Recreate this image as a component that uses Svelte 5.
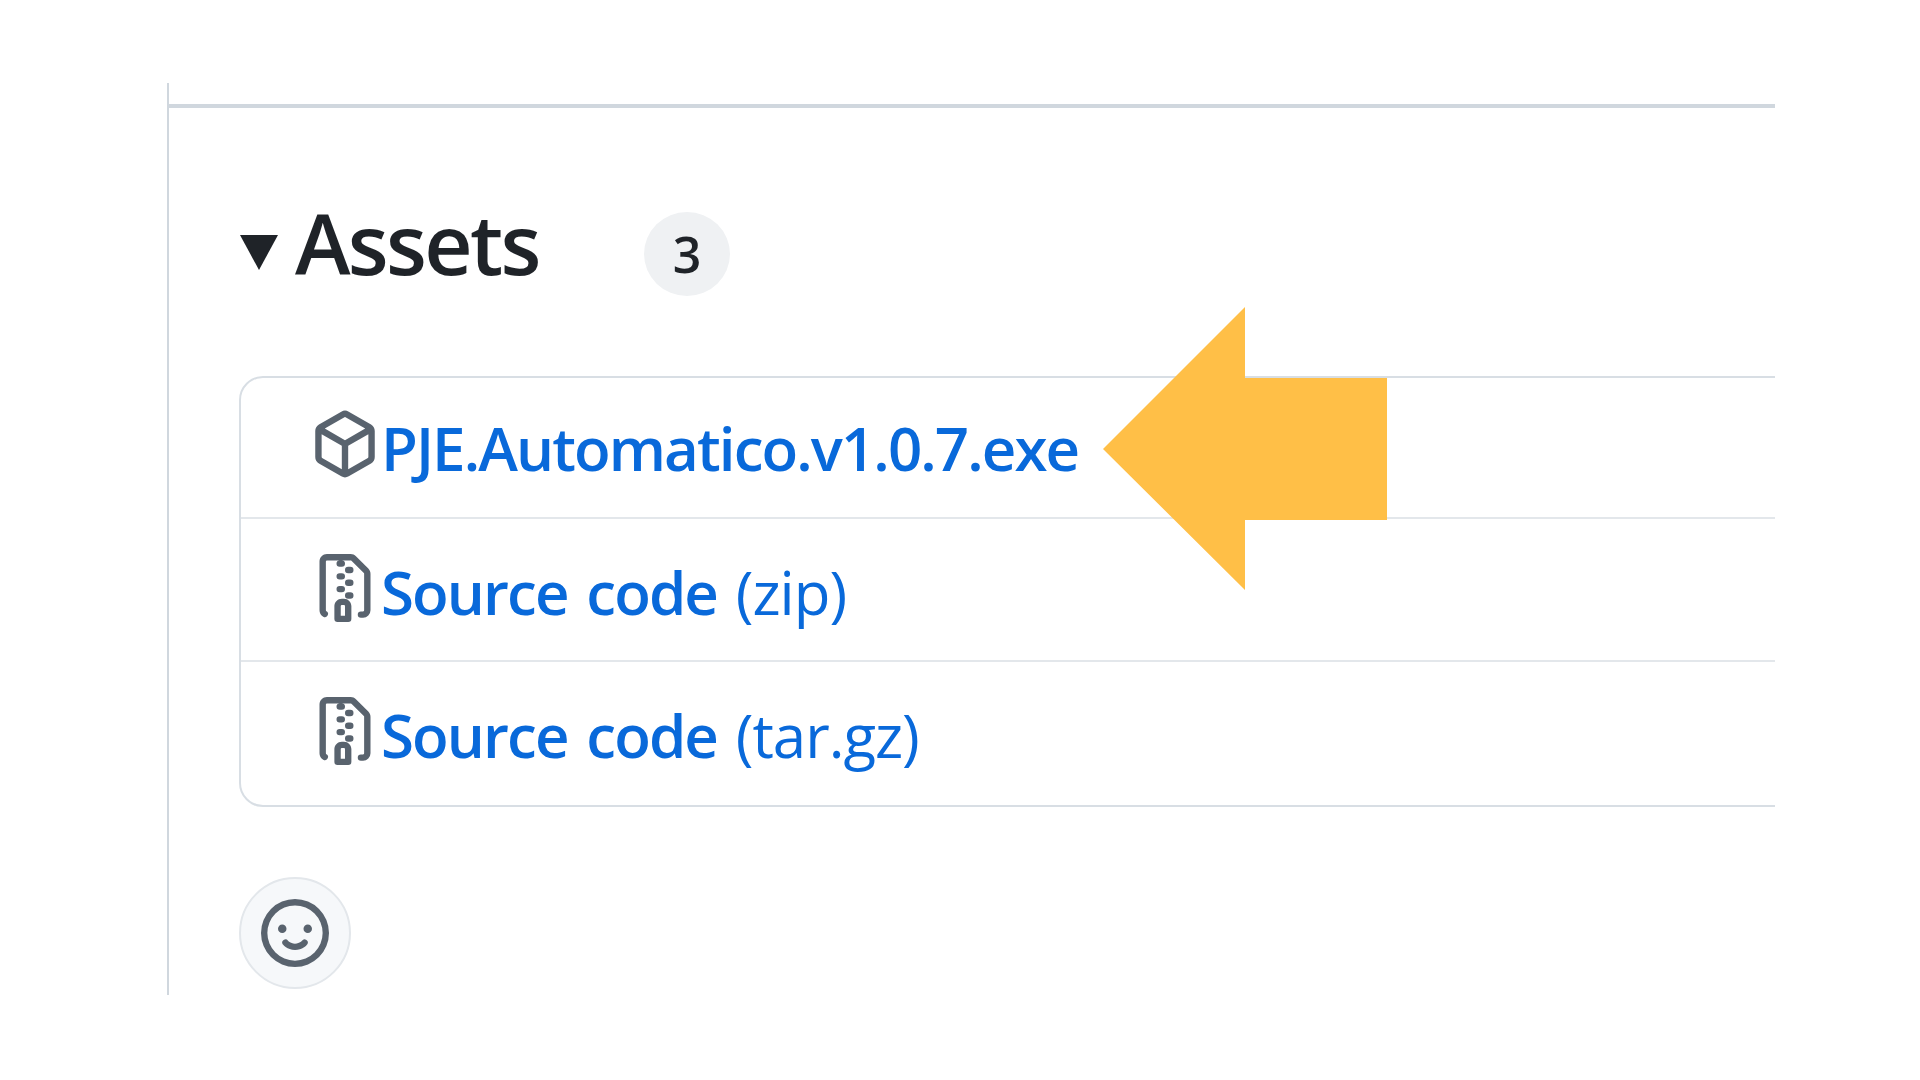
<script lang="ts">
	const zipPath =
		'M3.5 1.75v11.5c0 .09.048.173.126.217a.75.75 0 0 1-.752 1.298A1.748 1.748 0 0 1 2 13.25V1.75C2 .784 2.784 0 3.75 0h5.586c.464 0 .909.185 1.237.513l2.914 2.914c.329.328.513.773.513 1.237v8.586A1.75 1.75 0 0 1 12.25 15h-.5a.75.75 0 0 1 0-1.5h.5a.25.25 0 0 0 .25-.25V4.664a.25.25 0 0 0-.073-.177L9.513 1.573a.25.25 0 0 0-.177-.073H7.25a.75.75 0 0 1 0 1.5h-.5a.75.75 0 0 1 0-1.5h-3a.25.25 0 0 0-.25.25Zm3.75 8.75h.5c.966 0 1.75.784 1.75 1.75v3a.75.75 0 0 1-.75.75h-2.5a.75.75 0 0 1-.75-.75v-3c0-.966.784-1.75 1.75-1.75ZM6 5.25a.75.75 0 0 1 .75-.75h.5a.75.75 0 0 1 0 1.5h-.5A.75.75 0 0 1 6 5.25Zm.75 2.25h.5a.75.75 0 0 1 0 1.5h-.5a.75.75 0 0 1 0-1.5ZM8 6.75A.75.75 0 0 1 8.75 6h.5a.75.75 0 0 1 0 1.5h-.5A.75.75 0 0 1 8 6.75ZM8.75 3h.5a.75.75 0 0 1 0 1.5h-.5a.75.75 0 0 1 0-1.5ZM8 9.75A.75.75 0 0 1 8.75 9h.5a.75.75 0 0 1 0 1.5h-.5A.75.75 0 0 1 8 9.75Zm-1 2.5v2.25h1v-2.25a.25.25 0 0 0-.25-.25h-.5a.25.25 0 0 0-.25.25Z';
	const packagePath =
		'm8.878.392 5.25 3.045c.54.314.872.89.872 1.514v6.098a1.75 1.75 0 0 1-.872 1.514l-5.25 3.045a1.75 1.75 0 0 1-1.756 0l-5.25-3.045A1.75 1.75 0 0 1 1 11.049V4.951c0-.624.332-1.201.872-1.514L7.122.392a1.75 1.75 0 0 1 1.756 0ZM7.875 1.69l-4.63 2.685L8 7.133l4.755-2.758-4.63-2.685a.248.248 0 0 0-.25 0ZM2.5 5.677v5.372c0 .09.047.171.125.216l4.625 2.683V8.432Zm6.25 8.271 4.625-2.683a.25.25 0 0 0 .125-.216V5.677L8.75 8.432Z';
	const smileyPath =
		'M8 0a8 8 0 1 1 0 16A8 8 0 0 1 8 0ZM1.5 8a6.5 6.5 0 1 0 13 0 6.5 6.5 0 0 0-13 0Zm3.82 1.636a.75.75 0 0 1 1.038.175l.007.009c.103.118.22.222.35.31.264.178.683.37 1.285.37.602 0 1.02-.192 1.285-.371.13-.088.247-.192.35-.31l.007-.008a.75.75 0 0 1 1.222.87l-.022-.015c.02.013.021.015.021.015v.001l-.001.002-.002.003-.005.007-.014.019a2.066 2.066 0 0 1-.184.213c-.16.166-.338.316-.53.445-.63.418-1.37.638-2.127.629-.946 0-1.652-.308-2.126-.63a3.331 3.331 0 0 1-.715-.657l-.014-.02-.005-.006-.002-.003v-.002h-.001l.613-.432-.614.43a.75.75 0 0 1 .183-1.044ZM12 7a1 1 0 1 1-2 0 1 1 0 0 1 2 0ZM5 8a1 1 0 1 1 0-2 1 1 0 0 1 0 2Zm5.25 2.25.592.416a97.71 97.71 0 0 0-.592-.416Z';

	const assets = [
		{ icon: packagePath, name: 'PJE.Automatico.v1.0.7.exe', suffix: '' },
		{ icon: zipPath, name: 'Source code', suffix: '(zip)' },
		{ icon: zipPath, name: 'Source code', suffix: '(tar.gz)' }
	];
</script>

<div class="page">
	<div class="release">
		<hr class="rule" />

		<section class="assets">
			<header class="assets-head">
				<span class="caret"></span>
				<h2>Assets</h2>
				<span class="count">3</span>
			</header>

			<ul class="asset-list">
				{#each assets as asset}
					<li class="asset-row">
						<svg class="octicon" viewBox="0 0 16 16" aria-hidden="true">
							<path d={asset.icon} />
						</svg>
						<a href="#asset" class="asset-link">
							<strong>{asset.name}</strong>
							{#if asset.suffix}<span class="suffix">{asset.suffix}</span>{/if}
						</a>
					</li>
				{/each}
			</ul>

			<button class="reaction" type="button" aria-label="Add reaction">
				<svg class="octicon" viewBox="0 0 16 16" aria-hidden="true">
					<path d={smileyPath} />
				</svg>
			</button>
		</section>
	</div>

	<svg class="arrow" viewBox="0 0 284 283" aria-hidden="true">
		<polygon points="0,142 142,0 142,71 284,71 284,213 142,213 142,283" />
	</svg>
</div>

<style>
	:global(body) {
		background: #fff;
	}

	.page {
		position: relative;
		width: 1920px;
		height: 1080px;
		padding: 83px 0 0 167px;
		box-sizing: border-box;
		overflow: hidden;
		font-family: 'Open Sans', 'Noto Sans', sans-serif;
	}

	.release {
		width: 1606px;
		height: 912px;
		border-left: 2px solid #d0d7de;
		overflow: hidden;
		filter: blur(0.5px);
	}

	.rule {
		height: 4px;
		margin: 21px 0 0;
		border: none;
		background: #d0d7de;
	}

	.assets {
		padding: 0 0 0 70px;
	}

	.assets-head {
		display: flex;
		align-items: center;
		height: 104px;
		margin-top: 83px;
	}

	.caret {
		width: 0;
		height: 0;
		border-left: 19px solid transparent;
		border-right: 19px solid transparent;
		border-top: 35px solid #1f2328;
		margin: 18px 17px 0 1px;
	}

	h2 {
		margin: 0;
		font-size: 84px;
		font-weight: 600;
		line-height: 1;
		color: #1f2328;
		letter-spacing: -2.7px;
		width: 349px;
	}

	.count {
		display: flex;
		align-items: center;
		justify-content: center;
		width: 86px;
		height: 84px;
		margin: 22px 0 0 0;
		border-radius: 50%;
		background: #eff1f3;
		color: #1f2328;
		font-size: 50px;
		font-weight: 600;
	}

	.asset-list {
		width: 1600px;
		margin: 81px 0 0;
		padding: 0;
		list-style: none;
		border: 2px solid #d8dee4;
		border-radius: 24px;
	}

	.asset-row {
		display: flex;
		align-items: center;
		gap: 2px;
		box-sizing: border-box;
		height: 143px;
		padding: 4px 0 0 70px;
		border-top: 2px solid #e3e7eb;
	}

	.asset-row:first-child {
		height: 139px;
		padding-top: 0;
		border-top: none;
	}

	.asset-row:last-child {
		height: 145px;
		padding-top: 2px;
	}

	.asset-list .octicon {
		width: 68px;
		height: 68px;
		flex: none;
		margin-bottom: 8px;
		fill: #59636e;
	}

	.asset-link {
		color: #0969da;
		font-size: 60px;
		line-height: 1;
		text-decoration: none;
		letter-spacing: -1.9px;
		word-spacing: 5px;
	}

	.asset-link strong {
		font-weight: 600;
	}

	.suffix {
		font-weight: 400;
		letter-spacing: -1px;
		word-spacing: 0;
	}

	.reaction {
		display: flex;
		align-items: center;
		justify-content: center;
		width: 112px;
		height: 112px;
		margin-top: 70px;
		padding: 0;
		border: 2px solid #e3e7eb;
		border-radius: 50%;
		background: #f6f8fa;
	}

	.reaction .octicon {
		width: 68px;
		height: 68px;
		fill: #59636e;
	}

	.arrow {
		position: absolute;
		left: 1103px;
		top: 307px;
		width: 284px;
		height: 283px;
		fill: #ffbf47;
	}
</style>
